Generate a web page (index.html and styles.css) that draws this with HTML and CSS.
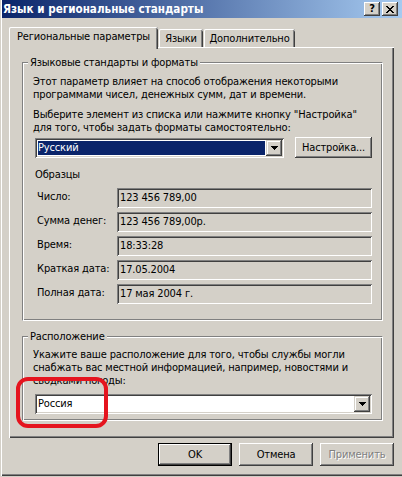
FILE: index.html
```html
<!DOCTYPE html>
<html lang="ru">
<head>
<meta charset="utf-8">
<title>Язык и региональные стандарты</title>
<link rel="stylesheet" href="styles.css">
</head>
<body>
<div class="window">
  <div class="titlebar">
    <span class="title">Язык и региональные стандарты</span>
    <div class="caption-buttons">
      <span class="cap-btn help">?</span>
      <span class="cap-btn close"><svg width="8" height="7" viewBox="0 0 8 7" shape-rendering="crispEdges"><path d="M0 0h2v1h-2z M6 0h2v1h-2z M1 1h2v1h-2z M5 1h2v1h-2z M2 2h4v1h-4z M3 3h2v1h-2z M2 4h4v1h-4z M1 5h2v1h-2z M5 5h2v1h-2z M0 6h2v1h-2z M6 6h2v1h-2z" fill="#000"/></svg></span>
    </div>
  </div>
  <div class="content">
    <div class="tabs">
      <div class="tab active t1">Региональные параметры</div>
      <div class="tab t2">Языки</div>
      <div class="tab t3">Дополнительно</div>
    </div>
    <div class="panel">
      <div class="group g1">
        <div class="legend">Языковые стандарты и форматы</div>
        <p class="p1">Этот параметр влияет на способ отображения некоторыми<br>программами чисел, денежных сумм, дат и времени.</p>
        <p class="p2">Выберите элемент из списка или нажмите кнопку "Настройка"<br>для того, чтобы задать форматы самостоятельно:</p>
        <div class="locale-row">
          <div class="combo locale">
            <span class="combo-text selected">Русский</span>
            <span class="combo-btn"><svg width="7" height="4" viewBox="0 0 7 4" shape-rendering="crispEdges"><path d="M0 0h7v1h-1v1h-1v1h-1v1h-1v-1h-1v-1h-1v-1h-1z" fill="#000"/></svg></span>
          </div>
          <button class="btn customize">Настройка...</button>
        </div>
        <div class="samples-title">Образцы</div>
        <div class="samples">
          <div class="sample"><span class="lbl">Число:</span><span class="field">123 456 789,00</span></div>
          <div class="sample"><span class="lbl">Сумма денег:</span><span class="field">123 456 789,00р.</span></div>
          <div class="sample"><span class="lbl">Время:</span><span class="field">18:33:28</span></div>
          <div class="sample"><span class="lbl">Краткая дата:</span><span class="field">17.05.2004</span></div>
          <div class="sample"><span class="lbl">Полная дата:</span><span class="field">17 мая 2004 г.</span></div>
        </div>
      </div>
      <div class="group g2">
        <div class="legend">Расположение</div>
        <p class="p3">Укажите ваше расположение для того, чтобы службы могли<br>снабжать вас местной информацией, например, новостями и<br>сводками погоды:</p>
        <div class="combo location">
          <span class="combo-text">Россия</span>
          <span class="combo-btn"><svg width="7" height="4" viewBox="0 0 7 4" shape-rendering="crispEdges"><path d="M0 0h7v1h-1v1h-1v1h-1v1h-1v-1h-1v-1h-1v-1h-1z" fill="#000"/></svg></span>
        </div>
      </div>
    </div>
    <div class="buttons">
      <button class="btn dlg default">OK</button>
      <button class="btn dlg">Отмена</button>
      <button class="btn dlg disabled">Применить</button>
    </div>
  </div>
  <div class="annotation"></div>
</div>
</body>
</html>
```
FILE: styles.css
```css
* { box-sizing: border-box; }
html, body { margin: 0; padding: 0; }
body {
  width: 402px;
  height: 477px;
  overflow: hidden;
  background: #d4d0c8;
  color: #000;
  font-family: "DejaVu Sans Condensed", "Liberation Sans", Arial, sans-serif;
  font-size: 11px;
  line-height: 13px;
  letter-spacing: -0.15px;
}
.window {
  position: relative;
  width: 402px;
  height: 476px;
  display: flex;
  flex-direction: column;
  padding: 0 0 2px 2px;
  box-shadow: inset 1px 0 #d4d0c8, inset 2px 0 #fff, inset 0 -1px #404040, inset 0 -2px #808080;
}
.titlebar {
  height: 18px;
  flex: none;
  display: flex;
  align-items: center;
  justify-content: space-between;
  padding: 0 4px 0 1px;
  background: linear-gradient(90deg, #0a246a, #a6caf0);
  color: #fff;
}
.title { font-weight: bold; font-size: 11.6px; letter-spacing: 0; white-space: nowrap; }
.caption-buttons { display: flex; gap: 2px; }
.cap-btn {
  width: 16px;
  height: 14px;
  display: flex;
  align-items: center;
  justify-content: center;
  background: #d4d0c8;
  color: #000;
  font-weight: bold;
  font-size: 11px;
  line-height: 14px;
  letter-spacing: 0;
  box-shadow: inset -1px -1px #404040, inset 1px 1px #fff, inset -2px -2px #808080, inset 2px 2px #d4d0c8;
}
.content {
  flex: 1;
  display: flex;
  flex-direction: column;
  padding: 9px 8px 0 7px;
}
.tabs { display: flex; align-items: flex-end; height: 20px; flex: none; }
.tab {
  height: 18px;
  padding-top: 3px;
  text-align: center;
  white-space: nowrap;
  background: #d4d0c8;
  border-radius: 2px 2px 0 0;
  box-shadow: inset 1px 0 #fff, inset 0 1px #fff, inset -1px 0 #404040, inset -2px 0 #808080;
}
.tab.active { height: 22px; margin-bottom: -2px; position: relative; z-index: 1; }
.t1 { width: 149px; }
.t2 { width: 44px; margin-left: 1px; }
.t3 { width: 91px; margin-left: 1px; }
.panel {
  display: flex;
  flex-direction: column;
  padding: 15px 11px 17px 13px;
  box-shadow: inset 1px 1px #fff, inset -1px -1px #404040, inset -2px -2px #808080;
}
.group {
  display: flex;
  flex-direction: column;
  border: 1px solid;
  border-color: #808080 #fff #fff #808080;
  box-shadow: inset 1px 1px #fff, inset -1px -1px #808080;
  padding: 0 10px 16px 10px;
}
.g2 { margin-top: 15px; padding-bottom: 6px; }
.legend {
  align-self: flex-start;
  margin: -7px 0 0 -5px;
  padding: 0 2px;
  background: #d4d0c8;
  white-space: nowrap;
}
p { margin: 0; white-space: nowrap; }
.p1 { margin-top: 6px; }
.p2 { margin-top: 7px; }
.p3 { margin-top: 5px; }
.locale-row {
  display: flex;
  justify-content: space-between;
  align-items: flex-start;
  margin: 3px 0 0 2px;
}
.combo {
  height: 20px;
  display: flex;
  padding: 2px;
  background: #fff;
  box-shadow: inset 1px 1px #808080, inset -1px -1px #fff, inset 2px 2px #404040, inset -2px -2px #d4d0c8;
}
.combo.locale { width: 249px; margin-top: 1px; }
.combo.location { width: 337px; margin: 7px 0 0 2px; align-self: flex-start; }
.combo-text {
  flex: 1;
  margin: 1px;
  line-height: 14px;
  white-space: nowrap;
}
.combo-text.selected { background: #0a246a; color: #fff; }
.combo-btn {
  width: 16px;
  height: 16px;
  flex: none;
  display: flex;
  align-items: center;
  justify-content: center;
  background: #d4d0c8;
  box-shadow: inset -1px -1px #404040, inset 1px 1px #d4d0c8, inset -2px -2px #808080, inset 2px 2px #fff;
}
.btn {
  font: inherit;
  letter-spacing: inherit;
  color: #000;
  margin: 0;
  padding: 0;
  border: none;
  background: #d4d0c8;
  text-align: center;
  white-space: nowrap;
  box-shadow: inset -1px -1px #404040, inset 1px 1px #fff, inset -2px -2px #808080, inset 2px 2px #d4d0c8;
}
.btn.customize { width: 77px; height: 21px; }
.samples-title { margin: 10px 0 0 2px; }
.samples { display: flex; flex-direction: column; gap: 4px; margin-top: 7px; }
.sample { display: flex; height: 20px; }
.lbl { width: 80px; margin-left: 4px; padding-top: 2px; white-space: nowrap; }
.field {
  flex: 1;
  height: 20px;
  padding: 2px 3px;
  line-height: 16px;
  white-space: nowrap;
  box-shadow: inset 1px 1px #808080, inset -1px -1px #fff, inset 2px 2px #404040, inset -2px -2px #d4d0c8;
}
.buttons {
  display: flex;
  justify-content: flex-end;
  gap: 7px;
  margin-top: 5px;
}
.btn.dlg { width: 74px; height: 23px; }
.btn.default { border: 1px solid #000; }
.btn.disabled { color: #808080; text-shadow: 1px 1px #fff; }
.annotation {
  position: absolute;
  left: 16px;
  top: 377px;
  width: 92px;
  height: 51px;
  border: 4px solid #e5141e;
  border-radius: 12px;
  pointer-events: none;
}
```
